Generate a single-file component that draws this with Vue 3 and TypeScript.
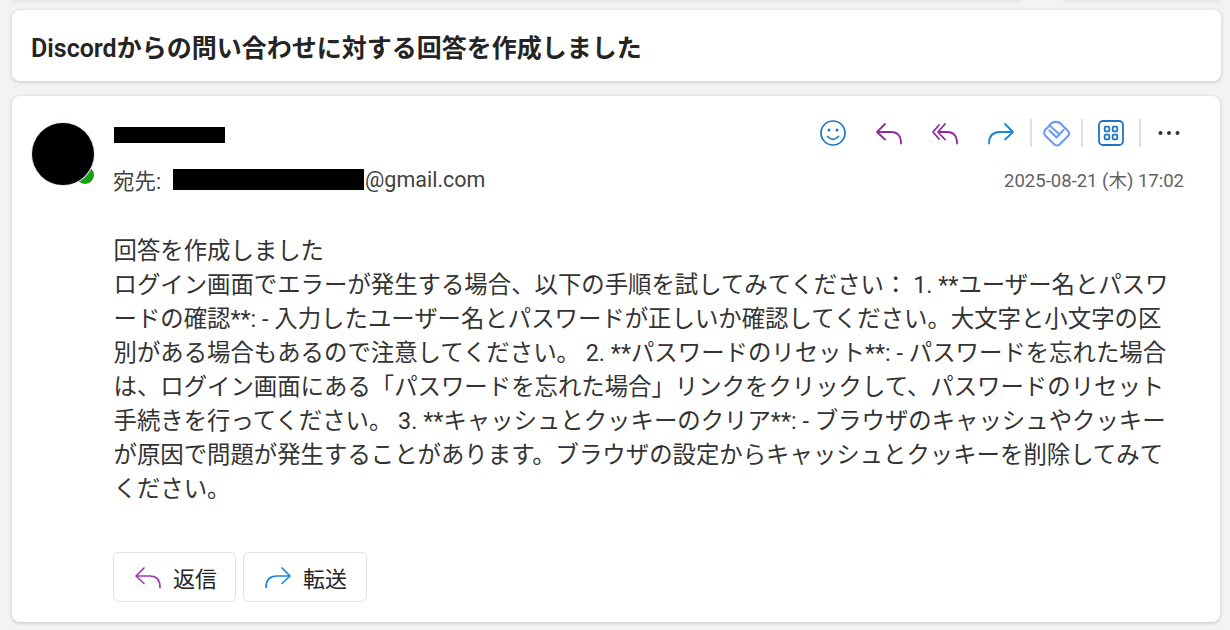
<script setup lang="ts">
const lines: string[] = [
  '回答を作成しました',
  'ログイン画面でエラーが発生する場合、以下の手順を試してみてください： 1. **ユーザー名とパスワ',
  'ードの確認**: - 入力したユーザー名とパスワードが正しいか確認してください。大文字と小文字の区',
  '別がある場合もあるので注意してください。 2. **パスワードのリセット**: - パスワードを忘れた場合',
  'は、ログイン画面にある「パスワードを忘れた場合」リンクをクリックして、パスワードのリセット',
  '手続きを行ってください。 3. **キャッシュとクッキーのクリア**: - ブラウザのキャッシュやクッキー',
  'が原因で問題が発生することがあります。ブラウザの設定からキャッシュとクッキーを削除してみて',
  'ください。',
]
</script>

<template>
  <div class="page">
    <div class="sliver">
      <div class="sliver-a"></div>
      <div class="sliver-b"></div>
    </div>
    <header class="card title-card">
      <h1 class="title">Discordからの問い合わせに対する回答を作成しました</h1>
    </header>
    <main class="card mail">
      <div class="head">
        <div class="avatar-wrap">
          <div class="presence"></div>
          <div class="avatar"></div>
        </div>
        <div class="meta">
          <div class="row-top">
            <div class="redact-name"></div>
            <div class="toolbar">
              <svg class="ic" viewBox="0 0 32 32" fill="none" stroke="#1b75c4" stroke-width="1.7" stroke-linecap="round">
                <circle cx="16" cy="16" r="12" />
                <path d="M10.5 19.5Q16 25 21.5 19.5" />
                <circle cx="12" cy="13" r="1.5" fill="#1b75c4" stroke="none" />
                <circle cx="20" cy="13" r="1.5" fill="#1b75c4" stroke="none" />
              </svg>
              <svg class="ic gap" viewBox="0 0 32 32" fill="none" stroke="#90299c" stroke-width="1.8" stroke-linecap="round" stroke-linejoin="round">
                <path d="M12 7L4 15L12 22.5M4 15H18Q28 15 28 26.5" />
              </svg>
              <svg class="ic gap" viewBox="0 0 32 32" fill="none" stroke="#90299c" stroke-width="1.8" stroke-linecap="round" stroke-linejoin="round">
                <path d="M10 8L4 15L10 22M16 7L9 15L16 22.5M9 15H18Q28 15 28 26.5" />
              </svg>
              <svg class="ic gap" viewBox="0 0 32 32" fill="none" stroke="#1a86d9" stroke-width="1.8" stroke-linecap="round" stroke-linejoin="round">
                <path d="M4 26.5Q4 15 15 15H28M20 7L28 15L20 22.5" />
              </svg>
              <div class="sep sep-1"></div>
              <svg class="ic loop" viewBox="0 0 32 32" fill="none" stroke="#6f9cf5" stroke-width="2.2" stroke-linejoin="round" stroke-linecap="round">
                <path d="M5.6 12.5L9.5 8.5C12 4 19 3.5 22 8L28 14A3.2 3.2 0 0 1 28 19L19.5 27.5A3.6 3.6 0 0 1 14.5 27.5L5.6 19A4.6 4.6 0 0 1 5.6 12.5Z" />
                <path d="M9.5 8.5L18.5 16.5M9.5 13.5L16.5 20.5L23.5 13" />
              </svg>
              <div class="sep sep-2"></div>
              <svg class="ic apps" viewBox="0 0 32 32" fill="none" stroke="#1b75c4" stroke-width="1.8">
                <rect x="4" y="4" width="24" height="24" rx="4" />
                <rect x="9.7" y="9.7" width="4.6" height="4.6" rx="1" />
                <rect x="17.7" y="9.7" width="4.6" height="4.6" rx="1" />
                <rect x="9.7" y="17.7" width="4.6" height="4.6" rx="1" />
                <rect x="17.7" y="17.7" width="4.6" height="4.6" rx="1" />
              </svg>
              <div class="sep sep-3"></div>
              <svg class="ic more" viewBox="0 0 32 32" fill="#333">
                <circle cx="7.5" cy="16" r="2" />
                <circle cx="16" cy="16" r="2" />
                <circle cx="24.5" cy="16" r="2" />
              </svg>
            </div>
          </div>
          <div class="row-to">
            <span class="to-label">宛先:</span>
            <span class="redact-mail"></span>
            <span class="to-domain">@gmail.com</span>
            <span class="date">2025-08-21 (木) 17:02</span>
          </div>
        </div>
      </div>
      <div class="body">
        <div v-for="(line, i) in lines" :key="i" class="line">{{ line }}</div>
      </div>
      <div class="actions">
        <button class="btn">
          <svg class="btn-ic" viewBox="0 0 32 32" fill="none" stroke="#a03bb0" stroke-width="1.7" stroke-linecap="round" stroke-linejoin="round">
            <path d="M12 7L4 15L12 22.5M4 15H18Q28 15 28 26.5" />
          </svg>
          <span>返信</span>
        </button>
        <button class="btn btn-fw">
          <svg class="btn-ic" viewBox="0 0 32 32" fill="none" stroke="#1a86d9" stroke-width="1.7" stroke-linecap="round" stroke-linejoin="round">
            <path d="M4 26.5Q4 15 15 15H28M20 7L28 15L20 22.5" />
          </svg>
          <span>転送</span>
        </button>
      </div>
    </main>
  </div>
</template>

<style>
html, body { margin: 0; background: #f3f3f3; }
</style>

<style scoped>
.page {
  width: 1230px;
  height: 630px;
  overflow: hidden;
  box-sizing: border-box;
  background: #f3f3f3;
  padding: 0 9px 0 12px;
  font-family: Roboto, "Noto Sans CJK JP", sans-serif;
  color: #262626;
  display: flex;
  flex-direction: column;
}
.sliver { display: flex; height: 0; justify-content: space-between; }
.sliver-a, .sliver-b { height: 0; box-shadow: 0 0 4px 1px rgba(0, 0, 0, 0.13); }
.sliver-a { width: 1008px; }
.sliver-b { width: 157px; }
.card {
  background: #fff;
  border-radius: 8px;
  box-shadow: 0 1px 4px rgba(0, 0, 0, 0.2);
}
.title-card {
  margin-top: 10px;
  height: 71px;
  display: flex;
  align-items: center;
  padding-left: 19px;
}
.title { margin: 0; font-size: 25px; font-weight: 600; color: #242424; }
.mail {
  margin-top: 15px;
  margin-right: 1px;
  height: 526px;
  padding: 27px 36px 0 20px;
  display: flex;
  flex-direction: column;
  box-sizing: border-box;
}
.head { display: flex; }
.avatar-wrap { position: relative; width: 62px; height: 62px; flex: none; margin-right: 19px; }
.avatar { position: absolute; inset: 0; border-radius: 50%; background: #000; box-shadow: 0 0 0 1px #e6e0fa; }
.presence { position: absolute; right: 0; bottom: 1px; width: 18px; height: 18px; border-radius: 50%; background: #13a10e; }
.meta { flex: 1; display: flex; flex-direction: column; }
.row-top { display: flex; justify-content: space-between; height: 20px; }
.redact-name { width: 111px; height: 16px; background: #000; margin-top: 4px; margin-left: 1px; }
.toolbar { display: flex; align-items: center; margin-top: -6px; height: 32px; margin-right: -1px; }
.ic { width: 32px; height: 32px; flex: none; display: block; }
.gap { margin-left: 24px; }
.sep { width: 2px; height: 28px; background: #e1e1e1; flex: none; }
.sep-1 { margin-left: 13px; }
.loop { margin-left: 8px; }
.sep-2 { margin-left: 9px; }
.apps { margin-left: 12px; }
.sep-3 { margin-left: 12px; }
.more { margin-left: 12px; }
.row-to { display: flex; align-items: center; height: 30px; margin-top: 21px; font-size: 21.5px; color: #424242; }
.to-label { width: 60px; flex: none; }
.redact-mail { width: 191px; height: 21px; background: #000; flex: none; }
.to-domain { margin-left: 1px; }
.date { margin-left: auto; font-size: 18.5px; color: #616161; }
.body { margin-top: 40px; margin-left: 81.5px; font-size: 23.4px; line-height: 34px; color: #333; }
.line { white-space: nowrap; }
.actions { display: flex; gap: 7px; margin-left: 81px; margin-top: 46px; }
.btn {
  height: 50px;
  width: 123px;
  box-sizing: border-box;
  border: 1px solid #e0e0e0;
  border-radius: 6px;
  background: #fff;
  display: flex;
  align-items: center;
  padding: 0 0 0 18px;
  font-family: inherit;
  font-size: 22px;
  color: #242424;
}
.btn-fw { width: 124px; }
.btn-ic { width: 32px; height: 32px; margin-right: 9px; flex: none; }
</style>
